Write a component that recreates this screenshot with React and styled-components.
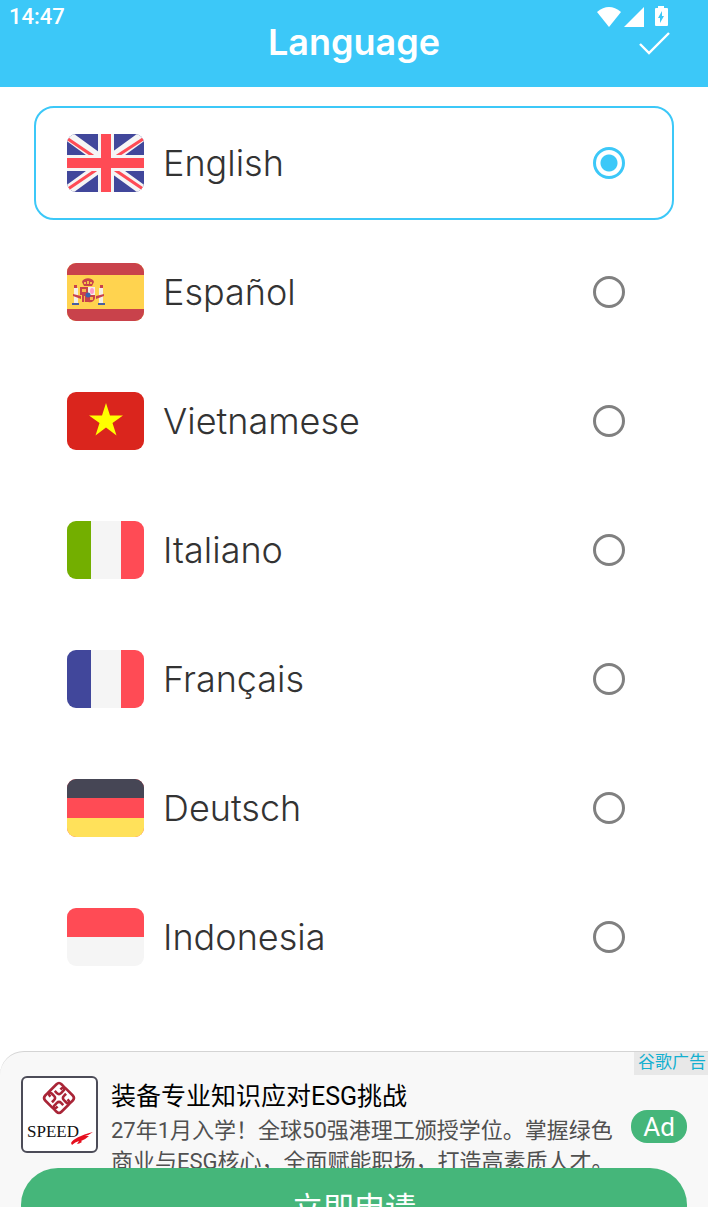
import { useState } from "react";
import styled, { createGlobalStyle } from "styled-components";

const GlobalStyle = createGlobalStyle`
  * {
    box-sizing: border-box;
  }
  body {
    margin: 0;
    background: #fff;
    font-family: Inter, "Noto Sans CJK SC", sans-serif;
  }
`;
const Page = styled.div`
  height: 100vh;
  display: flex;
  flex-direction: column;
  overflow: hidden;
`;
const Header = styled.header`
  height: 87px;
  flex-shrink: 0;
  background: #3cc8f8;
  color: #fff;
`;
const StatusBar = styled.div`
  height: 32px;
  display: flex;
  justify-content: space-between;
  align-items: center;
  padding: 0 37px 0 9px;
  font-family: Roboto, sans-serif;
  font-size: 22px;
  font-weight: 500;
`;
const StatusIcons = styled.svg`
  width: 74px;
  height: 22px;
`;
const TitleBar = styled.div`
  display: grid;
  grid-template-columns: 1fr auto 1fr;
  align-items: center;
  height: 44px;
  margin-top: -12px;
  padding: 0 34px;
`;
const Title = styled.h1`
  grid-column: 2;
  margin: 0;
  font-size: 36px;
  font-weight: 600;
  line-height: 44px;
`;
const ConfirmButton = styled.button`
  justify-self: end;
  display: flex;
  padding: 0;
  border: 0;
  background: none;
  color: inherit;
  cursor: pointer;
`;
const List = styled.main`
  flex: 1;
  min-height: 0;
  display: flex;
  flex-direction: column;
  gap: 15px;
  padding: 19px 34px 0;
`;
const Row = styled.label`
  flex-shrink: 0;
  display: flex;
  align-items: center;
  gap: 19px;
  height: 114px;
  padding: 0 47px 0 31px;
  border: 2px solid ${(props) => (props.$active ? "#3cc8f8" : "transparent")};
  border-radius: 20px;
  cursor: pointer;
`;
const Flag = styled.svg`
  width: 77px;
  height: 58px;
  border-radius: 9px;
`;
const Name = styled.span`
  flex: 1;
  color: #333;
  font-size: 36px;
  font-weight: 300;
  line-height: 44px;
`;
const Radio = styled.input`
  appearance: none;
  width: 32px;
  height: 32px;
  margin: 0;
  border: 3px solid #808080;
  border-radius: 50%;
  cursor: pointer;
  &:checked {
    border-color: #3cc8f8;
    background: radial-gradient(circle, #3cc8f8 8px, transparent 9px);
  }
`;
const Ad = styled.aside`
  position: relative;
  flex-shrink: 0;
  height: 156px;
  overflow: hidden;
  border-top: 1px solid #d4d4d4;
  border-top-left-radius: 24px;
  background: #f8f8f8;
  padding: 24px 21px 0;
  font-family: Roboto, "Noto Sans CJK SC", sans-serif;
`;
const AdChoice = styled.a`
  position: absolute;
  top: 0;
  right: 0;
  padding: 0 2px 2px 4px;
  background: #e8e8e8;
  color: #14b0d0;
  font-size: 17px;
  line-height: 21px;
  text-decoration: none;
`;
const AdBody = styled.div`
  display: flex;
  align-items: flex-start;
  height: 92px;
  overflow: hidden;
`;
const AdLogo = styled.svg`
  flex-shrink: 0;
  width: 77px;
  height: 77px;
  margin-right: 13px;
`;
const AdText = styled.div`
  flex: 1;
  min-width: 0;
`;
const AdTitle = styled.h2`
  margin: 5px 0 2px;
  color: #000;
  font-size: 25px;
  font-weight: 400;
  line-height: 32px;
`;
const AdCopy = styled.p`
  margin: 0;
  color: #505050;
  font-size: 22px;
  line-height: 31px;
`;
const AdBadge = styled.span`
  margin: 34px 0 0 8px;
  width: 56px;
  border-radius: 16px;
  background: #45b67a;
  color: #fff;
  font-size: 26px;
  line-height: 32px;
  padding-top: 1px;
  text-align: center;
`;
const AdButton = styled.button`
  display: block;
  width: 100%;
  height: 74px;
  border: 0;
  border-radius: 40px;
  background: #45b67a;
  color: #fff;
  font: inherit;
  font-size: 31px;
  cursor: pointer;
`;

const Spain = () => (
  <>
    <path fill="#ffd34f" d="M0 0h77v58H0z" />
    <path fill="#c9424b" d="M0 0h77v12H0zM0 46h77v12H0z" />
    <path fill="#f4efe6" d="M7 25h4v15H7zM32 25h4v15h-4z" />
    <path fill="#c9424b" d="M7 22h3v3H7zM33 22h3v3h-3zM6 31l8 2v3l-8-3zM37 31l-8 2v3l8-3z" />
    <path fill="#4a5f9f" d="M5 40h7v2H5zM31 40h7v2h-7z" />
    <path fill="#c9424b" d="M15 19c1-5 11-5 12 0l-2 4h-8z" />
    <path fill="#f3c04a" d="M17 19h2v2h-2zM20 18h2v3h-2zM23 19h2v2h-2z" />
    <path fill="#c9424b" d="M13 24h8v15h-6v-7h-2z" />
    <path fill="#f8b94a" d="M15 26h4v3h-4zM17 33h1v6h-1z" />
    <path fill="#f5eee6" d="M21 24h7v8h-7z" />
    <path fill="#c9424b" d="M21 32h7v3q-1 5-7 4z" />
    <path fill="#f8b94a" d="M23 34h3v3h-3z" />
    <ellipse cx="25" cy="28" rx="2" ry="3" fill="#ff9cc8" />
    <circle cx="21" cy="32" r="2.500" fill="#3d63ac" />
  </>
);
const Britain = () => (
  <>
    <path fill="#41479b" d="M0 0h77v58H0z" />
    <path stroke="#f5f5f5" strokeWidth="10" d="M0 1l77 56M77 1L0 57" />
    <path stroke="#ff4b55" strokeWidth="3.200" d="M1 5l25 17M76 5L50 22M1 55l28-19M76 55L48 36" />
    <path fill="#f5f5f5" d="M31 0h16v58H31zM0 21h77v16H0z" />
    <path fill="#ff4b55" d="M34 0h10v58H34zM0 24h77v10H0z" />
  </>
);

const languages = [
  { name: "English", flag: <Britain /> },
  { name: "Español", flag: <Spain /> },
  {
    name: "Vietnamese",
    flag: (
      <>
        <path fill="#da251d" d="M0 0h77v58H0z" />
        <path fill="#ff0" d="M39 11l4 12.500h13L45.500 31l4 12.500L39 35.500 28.500 43.500l4-12.500L22 23.500h13z" />
      </>
    ),
  },
  {
    name: "Italiano",
    flag: (
      <>
        <path fill="#f5f5f5" d="M0 0h77v58H0z" />
        <path fill="#73af00" d="M0 0h24v58H0z" />
        <path fill="#ff4b55" d="M54 0h23v58H54z" />
      </>
    ),
  },
  {
    name: "Français",
    flag: (
      <>
        <path fill="#f5f5f5" d="M0 0h77v58H0z" />
        <path fill="#41479b" d="M0 0h24v58H0z" />
        <path fill="#ff4b55" d="M54 0h23v58H54z" />
      </>
    ),
  },
  {
    name: "Deutsch",
    flag: (
      <>
        <path fill="#ff4b55" d="M0 0h77v58H0z" />
        <path fill="#464655" d="M0 0h77v19H0z" />
        <path fill="#ffe15a" d="M0 39h77v19H0z" />
      </>
    ),
  },
  {
    name: "Indonesia",
    flag: (
      <>
        <path fill="#f5f5f5" d="M0 0h77v58H0z" />
        <path fill="#ff4b55" d="M0 0h77v29H0z" />
      </>
    ),
  },
];

export default function App() {
  const [selected, setSelected] = useState("English");
  return (
    <Page>
      <GlobalStyle />
      <Header>
        <StatusBar>
          <span>14:47</span>
          <StatusIcons viewBox="0 0 74 22" fill="#fff" aria-hidden="true">
            <path d="M0 7q12-10 24 0L12 22z" />
            <path d="M47 2v20H27z" />
            <path
              fillRule="evenodd"
              d="M61 1h6v2h3q1 0 1 1v16q0 1-1 1H59q-1 0-1-1V4q0-1 1-1h2zM65 6l-4 7h2v5l4-7h-2z"
            />
          </StatusIcons>
        </StatusBar>
        <TitleBar>
          <Title>Language</Title>
          <ConfirmButton aria-label="Confirm">
            <svg width="36" height="30" fill="none" stroke="#fff" strokeWidth="2.400">
              <path d="M2 17l9 9L31 6" />
            </svg>
          </ConfirmButton>
        </TitleBar>
      </Header>
      <List>
        {languages.map(({ name, flag }) => (
          <Row key={name} $active={selected === name}>
            <Flag viewBox="0 0 77 58" aria-hidden="true">
              {flag}
            </Flag>
            <Name>{name}</Name>
            <Radio
              type="radio"
              name="language"
              checked={selected === name}
              onChange={() => setSelected(name)}
            />
          </Row>
        ))}
      </List>
      <Ad>
        <AdChoice href="#">谷歌广告</AdChoice>
        <AdBody>
          <AdLogo viewBox="0 0 77 77" aria-hidden="true">
            <rect x="1" y="1" width="75" height="75" rx="5" fill="#fff" stroke="#4c4c58" strokeWidth="2" />
            <g transform="translate(38 22) rotate(45)" fill="none" stroke="#a92537" strokeWidth="2.600">
              {[0, 90, 180, 270].map((angle) => (
                <path
                  key={angle}
                  transform={`rotate(${angle})`}
                  d="M-5-7V-8Q-5-11.500-2-11.500H8Q11.500-11.500 11.500-8V-5Q11.500-2 8-2H5Q2-2 2-5V-8"
                />
              ))}
            </g>
            <text x="6" y="61" fontFamily="Liberation Serif, serif" fontSize="17" fill="#111">
              SPEED
            </text>
            <path
              fill="#e60f1e"
              d="M50 67q3-6 22-11-4 3-8 4l4 0q-3 3-8 5l1 1q-3 2-5 2l2-3q-4 1-7 4z"
            />
          </AdLogo>
          <AdText>
            <AdTitle>装备专业知识应对ESG挑战</AdTitle>
            <AdCopy>27年1月入学！全球50强港理工颁授学位。掌握绿色商业与ESG核心，全面赋能职场，打造高素质人才。</AdCopy>
          </AdText>
          <AdBadge>Ad</AdBadge>
        </AdBody>
        <AdButton>立即申请</AdButton>
      </Ad>
    </Page>
  );
}
